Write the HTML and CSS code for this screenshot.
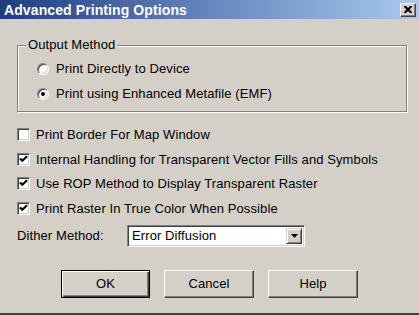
FILE: index.html
```html
<!DOCTYPE html>
<html>
<head>
<meta charset="utf-8">
<link rel="stylesheet" href="styles.css">
</head>
<body>
<div class="window">
  <div class="titlebar">
    <span class="title">Advanced Printing Options</span>
    <span class="close"><svg width="8" height="7" viewBox="0 0 8 7"><path d="M0 0h2l2 2 2-2h2v1l-2.5 2.5L8 6v1H6L4 5 2 7H0V6l2.5-2.5L0 1z" fill="#000"/></svg></span>
  </div>
  <div class="content">
    <fieldset class="group">
      <legend class="legend">Output Method</legend>
      <div class="opt"><span class="radio"></span><span>Print Directly to Device</span></div>
      <div class="opt"><span class="radio on"></span><span>Print using Enhanced Metafile (EMF)</span></div>
    </fieldset>
    <div class="checks">
      <div class="chk"><span class="box"></span><span>Print Border For Map Window</span></div>
      <div class="chk"><span class="box"><svg width="9" height="9" viewBox="0 0 9 9"><path d="M1 3.5 L3.3 5.8 L8 1.2" fill="none" stroke="#000" stroke-width="2.2"/></svg></span><span>Internal Handling for Transparent Vector Fills and Symbols</span></div>
      <div class="chk"><span class="box"><svg width="9" height="9" viewBox="0 0 9 9"><path d="M1 3.5 L3.3 5.8 L8 1.2" fill="none" stroke="#000" stroke-width="2.2"/></svg></span><span>Use ROP Method to Display Transparent Raster</span></div>
      <div class="chk"><span class="box"><svg width="9" height="9" viewBox="0 0 9 9"><path d="M1 3.5 L3.3 5.8 L8 1.2" fill="none" stroke="#000" stroke-width="2.2"/></svg></span><span>Print Raster In True Color When Possible</span></div>
    </div>
    <div class="dither">
      <span class="dlabel">Dither Method:</span>
      <div class="select"><span class="sval">Error Diffusion</span><span class="sbtn"><svg width="7" height="4" viewBox="0 0 7 4"><path d="M0 0h7L3.5 4z" fill="#000"/></svg></span></div>
    </div>
    <div class="buttons">
      <div class="btn default"><span>OK</span></div>
      <div class="btn"><span>Cancel</span></div>
      <div class="btn"><span>Help</span></div>
    </div>
  </div>
</div>
</body>
</html>
```
FILE: styles.css
```css
html, body {
  margin: 0;
  padding: 0;
  background: #d4d0c8;
}
.window {
  width: 419px;
  height: 315px;
  box-sizing: border-box;
  border-bottom: 2px solid #404040;
  overflow: hidden;
  font-family: "Liberation Sans", Arial, sans-serif;
  font-size: 13px;
  letter-spacing: 0.1px;
  color: #000;
}
.titlebar {
  height: 19px;
  display: flex;
  align-items: center;
  justify-content: space-between;
  padding: 0 3px 0 4px;
  background: linear-gradient(to right, #1e3c80 0%, #5f7fb8 45%, #a8c9ef 100%);
}
.title {
  color: #fff;
  font-weight: bold;
  font-size: 14px;
  letter-spacing: 0.1px;
}
.close {
  width: 16px;
  height: 14px;
  box-sizing: border-box;
  background: #d4d0c8;
  border-top: 1px solid #fff;
  border-left: 1px solid #fff;
  border-right: 1px solid #404040;
  border-bottom: 1px solid #404040;
  box-shadow: inset -1px -1px 0 #808080;
  display: flex;
  align-items: center;
  justify-content: center;
}
.content {
  padding: 0 12px 0 17px;
}
.group {
  margin: 18px 0 0 0;
  padding: 3px 0 5px 19px;
  border: 1px solid #808080;
  box-shadow: 1px 1px 0 #fff, inset 1px 1px 0 #fff;
  width: 390px;
  box-sizing: border-box;
}
.legend {
  padding: 0 2px;
  margin-left: -11px;
  background: #d4d0c8;
  line-height: 16px;
}
.opt {
  height: 25px;
  display: flex;
  align-items: center;
  gap: 7px;
}
.radio {
  width: 12px;
  height: 12px;
  box-sizing: border-box;
  border-radius: 50%;
  background: #fff;
  border: 1px solid;
  border-color: #808080 #fff #fff #808080;
  box-shadow: inset 1px 1px 0 #404040, inset -1px -1px 0 #d4d0c8;
  display: flex;
  align-items: center;
  justify-content: center;
}
.radio.on::after {
  content: "";
  width: 4px;
  height: 4px;
  border-radius: 50%;
  background: #000;
}
.checks {
  margin-top: 10px;
}
.chk {
  height: 24.7px;
  display: flex;
  align-items: center;
  gap: 6px;
}
.box {
  width: 13px;
  height: 13px;
  box-sizing: border-box;
  background: #fff;
  border: 1px solid;
  border-color: #808080 #fff #fff #808080;
  box-shadow: inset 1px 1px 0 #404040, inset -1px -1px 0 #d4d0c8;
  display: flex;
  align-items: center;
  justify-content: center;
}
.box svg {
  display: block;
}
.dither {
  margin-top: 4px;
  display: flex;
  align-items: center;
  height: 22px;
}
.dlabel {
  width: 110px;
}
.select {
  width: 178px;
  height: 22px;
  box-sizing: border-box;
  background: #fff;
  border: 1px solid;
  border-color: #808080 #fff #fff #808080;
  box-shadow: inset 1px 1px 0 #404040, inset -1px -1px 0 #d4d0c8;
  display: flex;
  align-items: center;
  padding: 2px;
}
.sval {
  flex: 1;
  padding-left: 2px;
}
.sbtn {
  width: 16px;
  height: 16px;
  box-sizing: border-box;
  background: #d4d0c8;
  border-top: 1px solid #d4d0c8;
  border-left: 1px solid #d4d0c8;
  border-right: 1px solid #404040;
  border-bottom: 1px solid #404040;
  box-shadow: inset 1px 1px 0 #fff, inset -1px -1px 0 #808080;
  display: flex;
  align-items: center;
  justify-content: center;
}
.buttons {
  margin: 23px 0 0 44px;
  display: flex;
  gap: 14px;
}
.btn {
  width: 90px;
  height: 28px;
  box-sizing: border-box;
  border-top: 1px solid #fff;
  border-left: 1px solid #fff;
  border-right: 1px solid #404040;
  border-bottom: 1px solid #404040;
  box-shadow: inset -1px -1px 0 #808080;
  display: flex;
  align-items: center;
  justify-content: center;
}
.btn.default {
  width: 89px;
  border: 1px solid #000;
  box-shadow: inset 1px 1px 0 #fff, inset -1px -1px 0 #404040, inset -2px -2px 0 #808080;
}
```
